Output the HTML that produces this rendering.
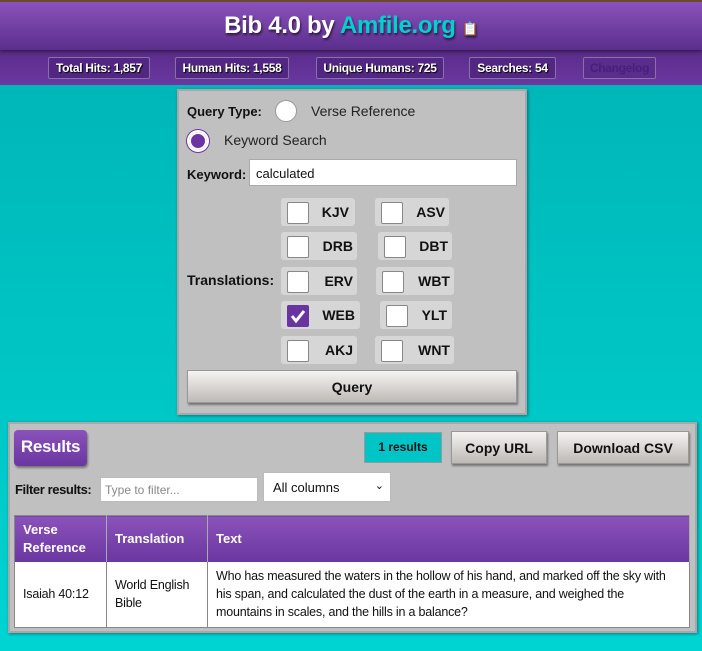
<!DOCTYPE html>
<html><head><meta charset="utf-8"><style>
*{box-sizing:border-box;margin:0;padding:0}
body{width:702px;height:651px;overflow:hidden;font-family:"Liberation Sans",sans-serif;background:linear-gradient(180deg,#00b2b4,#00d4d2);position:relative}
.a{position:absolute}
#hd{left:0;top:0;width:702px;height:50px;background:linear-gradient(180deg,#8a52bb,#5b2e8d);border-top:2px solid #6a4a2a;box-shadow:0 2px 3px rgba(0,0,0,.4);z-index:2}
#hd h1{font-size:24px;color:#fff;text-align:center;line-height:48px;font-weight:bold;text-shadow:1px 2px 2px rgba(0,0,0,.6);letter-spacing:-0.3px}
#sb{left:0;top:50px;width:702px;height:35px;background:linear-gradient(180deg,#5a2c8a,#6a38a0)}
.st{top:57px;height:22px;border:1px solid #8a70a8;border-radius:2px;background:#522784;color:#fff;font-size:12px;font-weight:bold;line-height:20px;text-align:center;text-shadow:1px 1px 1px #000;letter-spacing:-0.3px}
.pn{background:#c0c0c0;border:2px solid #a8a8a8;box-shadow:1px 1px 3px rgba(0,0,0,.4)}
.lb{font-size:13px;font-weight:bold;color:#111}
.cb{height:28px;background:#d6d6d6;border-radius:3px}
.cb i{position:absolute;left:6px;top:4px;width:22px;height:22px;background:#fff;border:1px solid #888;border-radius:2px}
.cb b{position:absolute;right:0;top:6px;font-size:14px;color:#111}
.btn{background:linear-gradient(180deg,#f6f4f2,#bdb9b5);border:1px solid #999;box-shadow:1px 2px 2px rgba(0,0,0,.4);font-weight:bold;color:#111;text-align:center}
th{background:linear-gradient(180deg,#8a52bb,#6a36a0);color:#fff;text-align:left;font-size:13px;font-weight:bold;padding:0 8px;border-right:1px solid #aaa}
td{background:#fff;font-size:12.5px;color:#111;padding:0 8px;border-right:1px solid #888;line-height:18px;letter-spacing:-0.2px}
</style></head><body>
<div id="hd" class="a"><h1>Bib 4.0 by <span style="color:#00d0d0">Amfile.org</span> <span style="font-size:13px">📋</span></h1></div>
<div id="sb" class="a"></div>
<div class="a st" style="left:48px;width:102px">Total Hits: 1,857</div>
<div class="a st" style="left:175px;width:114px">Human Hits: 1,558</div>
<div class="a st" style="left:316px;width:128px">Unique Humans: 725</div>
<div class="a st" style="left:469px;width:87px">Searches: 54</div>
<div class="a st" style="left:583px;width:73px;color:#45207a;text-shadow:none;background:#5a2c8c">Changelog</div>

<div class="a pn" style="left:177px;top:89px;width:350px;height:326px"></div>
<div class="a lb" style="left:187px;top:104px">Query Type:</div>
<div class="a" style="left:275px;top:100px;width:22px;height:22px;border-radius:50%;background:#fff;border:1px solid #999"></div>
<div class="a" style="left:311px;top:103px;font-size:14px;color:#222">Verse Reference</div>
<div class="a" style="left:187px;top:130px;width:22px;height:22px;border-radius:50%;background:#6b34a0;border:2px solid #fff;box-shadow:0 0 0 1px #6b34a0,inset 0 0 0 2px #fff"></div>
<div class="a" style="left:224px;top:132px;font-size:14px;color:#222">Keyword Search</div>
<div class="a lb" style="left:187px;top:167px">Keyword:</div>
<div class="a" style="left:249px;top:159px;width:268px;height:27px;background:#fff;border:1px solid #aaa;font-size:13px;padding:6px 6px;color:#111">calculated</div>
<div class="a lb" style="left:187px;top:272px;font-size:14px">Translations:</div>
<div class="a cb" style="left:281px;top:198px;width:74px"><i></i><b style="right:6px">KJV</b></div>
<div class="a cb" style="left:375px;top:198px;width:74px"><i></i><b style="right:4px">ASV</b></div>
<div class="a cb" style="left:281px;top:232px;width:76px"><i></i><b style="right:4px">DRB</b></div>
<div class="a cb" style="left:378px;top:232px;width:74px"><i></i><b style="right:4px">DBT</b></div>
<div class="a cb" style="left:281px;top:267px;width:76px"><i></i><b style="right:4px">ERV</b></div>
<div class="a cb" style="left:376px;top:267px;width:78px"><i></i><b style="right:4px">WBT</b></div>
<div class="a cb" style="left:281px;top:301px;width:79px"><i style="background:#6a34a0;border-color:#6a34a0"><svg width="22" height="22" viewBox="0 0 22 22" style="position:absolute;left:-1px;top:-1px"><path d="M5 11l4 5 8-10" stroke="#fff" stroke-width="3" fill="none"/></svg></i><b style="right:5px">WEB</b></div>
<div class="a cb" style="left:380px;top:301px;width:72px"><i></i><b style="right:5px">YLT</b></div>
<div class="a cb" style="left:281px;top:336px;width:76px"><i></i><b style="right:4px">AKJ</b></div>
<div class="a cb" style="left:375px;top:336px;width:79px"><i></i><b style="right:4px">WNT</b></div>
<div class="a btn" style="left:187px;top:370px;width:330px;height:33px;line-height:32px;font-size:14px">Query</div>

<div class="a pn" style="left:8px;top:422px;width:689px;height:211px"></div>
<div class="a" style="left:14px;top:430px;width:73px;height:36px;background:linear-gradient(180deg,#8a52bb,#6a36a0);border-radius:4px;color:#fff;font-weight:bold;font-size:17px;line-height:34px;text-align:center;box-shadow:1px 2px 2px rgba(0,0,0,.4);letter-spacing:-0.3px">Results</div>
<div class="a" style="left:364px;top:432px;width:78px;height:31px;background:#00c4c6;border:1px solid #999;color:#111;font-weight:bold;font-size:12px;line-height:29px;text-align:center">1 results</div>
<div class="a btn" style="left:451px;top:431px;width:96px;height:33px;line-height:32px;font-size:14px">Copy URL</div>
<div class="a btn" style="left:557px;top:431px;width:132px;height:33px;line-height:32px;font-size:14px">Download CSV</div>
<div class="a lb" style="left:15px;top:482px;font-size:13px;letter-spacing:-0.4px">Filter results:</div>
<div class="a" style="left:100px;top:477px;width:158px;height:25px;background:#fff;border:1px solid #bbb;font-size:12px;color:#888;padding:5px 4px">Type to filter...</div>
<div class="a" style="left:263px;top:472px;width:128px;height:30px;background:#fff;border:1px solid #bbb;font-size:13px;color:#111;padding:7px 9px">All columns<span style="position:absolute;right:6px;top:6px;font-size:11px">&#x2304;</span></div>
<table class="a" style="left:14px;top:515px;width:676px;border-collapse:collapse;border:1px solid #888">
<tr style="height:46px"><th style="width:92px;line-height:18px">Verse<br>Reference</th><th style="width:101px">Translation</th><th>Text</th></tr>
<tr style="height:66px"><td>Isaiah 40:12</td><td>World English<br>Bible</td><td style="padding-right:16px">Who has measured the waters in the hollow of his hand, and marked off the sky with his span, and calculated the dust of the earth in a measure, and weighed the mountains in scales, and the hills in a balance?</td></tr>
</table>
</body></html>
